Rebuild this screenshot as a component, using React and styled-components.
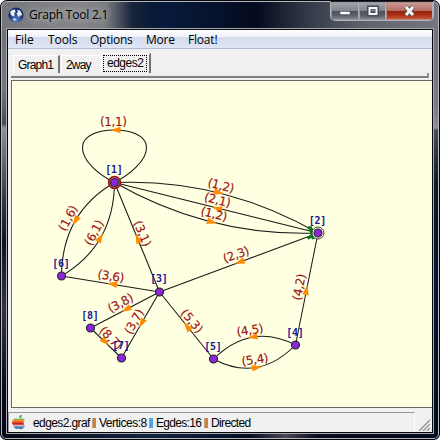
import React from "react";
import styled, { createGlobalStyle } from "styled-components";

const Global = createGlobalStyle`
  * { box-sizing: border-box; }
  body { margin: 0; background: #fff; overflow: hidden; }
`;

const Window = styled.div`
  width: 440px;
  height: 440px;
  display: flex;
  flex-direction: column;
  padding: 1px 6px 6px;
  border: 1px solid #05070b;
  border-radius: 7px 7px 6px 6px;
  box-shadow: inset 0 0 0 1px #b4b7bd;
  background:
    linear-gradient(90deg, #75777c 0, #85868a 18%, #797b80 24%, #27304080 30%, #0000 35%, #0000 58%, #555a6499 72%, #62646c 84%, #747780 100%) 0 0 / 100% 29px no-repeat,
    linear-gradient(90deg, #02030c, #08142c 20%, #081a3b 38%, #04091c 60%, #1b2236 80%, #454955) 0 0 / 100% 29px no-repeat,
    linear-gradient(180deg, #6d6f75 0, #74777c 20%, #484b55 28%, #8d9099 29%, #353945 45%, #101326 55%, #343246 70%, #080a1c 88%, #05071a) 0 0 / 9px 100% no-repeat,
    linear-gradient(180deg, #6c6f78 0, #777b84 24%, #8b909b 29%, #454b59 29.5%, #10172a 42%, #07152d 65%, #030b20) 100% 0 / 9px 100% no-repeat,
    linear-gradient(90deg, #090916, #11243e 35%, #080e24 57%, #4b4857 65%, #090d20 72%, #030b1c);
  font-family: "Open Sans", "Noto Sans", sans-serif;
  color: #000;
`;

const TitleBar = styled.header`
  height: 27px;
  display: flex;
  align-items: flex-start;
  flex-shrink: 0;
`;

const TitleIcon = styled.svg`
  width: 16px;
  height: 16px;
  margin: 5px 0 0 1px;
`;

const Title = styled.span`
  margin: 4px 0 0 5px;
  font-size: 12px;
  line-height: 18px;
  letter-spacing: -0.22px;
  white-space: nowrap;
  text-shadow: 0 0 6px #c8c8c8, 0 0 8px #b5b5b5;
  flex: 1;
`;

const Controls = styled.div`
  display: flex;
  height: 20px;
  width: 104px;
  margin-top: -1px;
  margin-right: -1px;
  border: 1px solid #aeb1b8;
  border-top-color: #22242a;
  border-radius: 0 0 5px 5px;
  overflow: hidden;
`;

const Control = styled.button`
  width: ${(p) => p.$width}px;
  padding: 0;
  border: 1px solid ${(p) => (p.$close ? "#b98982" : "#93969c")};
  border-right-color: #aeb1b8;
  background: ${(p) =>
    p.$close
      ? "linear-gradient(#c69c94 0, #b46b60 48%, #982311 50%, #a52d13 72%, #ca5839)"
      : "linear-gradient(#a0a3a8 0, #7f838a 48%, #4d535d 50%, #565d67 75%, #7b828c)"};
  display: flex;
  align-items: center;
  justify-content: center;
`;

const Client = styled.main`
  flex: 1;
  min-height: 0;
  border: 1px solid #080808;
  box-shadow: 0 0 0 1px #a5a8b0;
  background: #f0f0f0;
  display: flex;
  flex-direction: column;
  overflow: hidden;
`;

const MenuBar = styled.nav`
  display: flex;
  height: 19px;
  flex-shrink: 0;
  padding-left: 7px;
  background: linear-gradient(#fff 0, #eef1f8 38%, #d4dbed 40%, #e0e6f5 100%);
  border-bottom: 1px solid #b2bdd3;
`;

const MenuItem = styled.span`
  width: ${(p) => p.$width}px;
  font-size: 12px;
  line-height: 20px;
  letter-spacing: ${(p) => p.$spacing || 0}px;
  white-space: nowrap;
`;

const TabStrip = styled.div`
  height: 29px;
  flex-shrink: 0;
  margin: 0 3px 0 3px;
  border-bottom: 2px solid #808080;
  border-right: 2px solid #909090;
  background: linear-gradient(#f0f0f0, #f0f0f0) 0 0 / 100% 24px no-repeat, linear-gradient(#fff 0 60%, #eee 60%);
  clip-path: polygon(0 0, calc(100% - 3px) 0, calc(100% - 3px) 24px, 100% 24px, 100% 100%, 0 100%);
  display: flex;
  align-items: flex-end;
  padding: 0 0 3px 2px;
`;

const Tab = styled.div`
  width: ${(p) => p.$width}px;
  height: ${(p) => (p.$active ? 20 : 18)}px;
  padding: ${(p) => (p.$active ? "1px 2px 2px 1px" : "0 0 0 4px")};
  border: 1px solid #fff;
  border-bottom: 0;
  border-right: ${(p) => (p.$active || p.$shade ? "2px solid #737373" : "0")};
  font: 12px/18px "Liberation Sans", sans-serif;
  letter-spacing: ${(p) => p.$spacing || 0}px;
  white-space: nowrap;
  margin-right: ${(p) => (p.$active ? 0 : 1)}px;
`;

const TabFocus = styled.span`
  display: block;
  height: 17px;
  border: 1px dotted #000;
  padding-left: 3px;
  line-height: 14px;
`;

const Canvas = styled.section`
  height: 328px;
  flex-shrink: 0;
  margin: 2px 0 0 3px;
  border: 1px solid #686868;
  border-right: 0;
  background: #ffffe1;
`;

const GraphArt = styled.svg`
  display: block;
  width: 420px;
  height: 326px;
`;

const EdgeLabel = styled.text`
  font: 12px "DejaVu Sans", sans-serif;
  fill: #9c1418;
  stroke: #9c1418;
  stroke-width: 0.15px;
  text-anchor: middle;
`;

const NodeLabel = styled.text`
  font: bold 10px "DejaVu Sans Mono", monospace;
  fill: #171796;
  text-anchor: middle;
`;

const StatusBar = styled.footer`
  flex: 1;
  min-height: 0;
  display: flex;
  align-items: flex-end;
  padding-top: 4px;
`;

const StatusPanel = styled.div`
  width: 407px;
  height: 100%;
  border-top: 1px solid #999;
  border-left: 1px solid #999;
  border-right: 1px solid #fff;
  display: flex;
  align-items: center;
  font: 12px "Liberation Sans", sans-serif;
`;

const AppleIcon = styled.svg`
  width: 14px;
  height: 15px;
  margin-left: 3px;
  margin-bottom: 1px;
`;

const StatusText = styled.span`
  width: ${(p) => p.$width}px;
  letter-spacing: ${(p) => p.$spacing}px;
  margin-left: ${(p) => p.$left}px;
  white-space: nowrap;
`;

const Divider = styled.i`
  width: 4px;
  height: 10px;
  border-left: 1px solid #b8a28e;
  background: ${(p) => (p.$blue ? "#51a0df" : "#d2832f")};
`;

const Grip = styled.svg`
  width: 12px;
  height: 12px;
  margin: 0 1px 1px 3px;
`;

const nodes = [
  [1, 114.5, 182.5, 173],
  [2, 318, 233, 223.5],
  [3, 159.5, 292, 282],
  [4, 295.5, 345, 335.5],
  [5, 213.5, 359, 350],
  [6, 61.5, 276, 266.5],
  [7, 121.5, 358, 349],
  [8, 90.5, 328, 318.5],
];

const paths = [
  "M114.5 182.5C99 175 82 161 82.5 147C83 135 99 130 114.5 130C130 130 146 135 146.5 147C147 161 129 175 114.5 182.5",
  "M114.5 182.5Q222 178 318 233",
  "M318 233L114.5 182.5",
  "M114.5 182.5Q210 237 318 233",
  "M318 233L159.5 292",
  "M159.5 292L114.5 182.5",
  "M114.5 182.5Q62 213 61.5 276",
  "M61.5 276Q114 245 114.5 182.5",
  "M159.5 292L61.5 276",
  "M159.5 292L90.5 328",
  "M159.5 292L121.5 358",
  "M90.5 328L121.5 358",
  "M213.5 359L159.5 292",
  "M295.5 345L318 233",
  "M295.5 345Q251 322 213.5 359",
  "M213.5 359Q258 383 295.5 345",
];

const arrows = [
  [115.5, 130, 180], [219, 192.5, 14], [217, 208.5, 194], [212, 222, 14],
  [239.5, 262, 160], [137.5, 238.5, 248], [75.5, 221, 119], [100.5, 237.5, -60],
  [112, 284, 189], [126, 309.5, 152], [141.5, 323.5, 120], [105.5, 342, 44],
  [187, 326.5, 231], [306.5, 290, -79], [252.5, 337, 170], [257, 367.5, -9],
];

const labels = [
  ["(1,1)", 113.5, 122, 0], ["(1,2)", 221, 185.5, 14], ["(2,1)", 217.5, 200, 14],
  ["(1,2)", 214, 214, 14], ["(2,3)", 236, 254.5, -20], ["(3,1)", 142.5, 233.5, 67],
  ["(1,6)", 68, 218, -62], ["(6,1)", 94, 232.5, -62], ["(3,6)", 111, 276, 9],
  ["(3,8)", 120.5, 303, -28], ["(3,7)", 134, 321.5, -60], ["(8,7)", 111, 338, 46],
  ["(5,3)", 192, 321, 50], ["(4,2)", 299, 287, -79], ["(4,5)", 250, 330, -9],
  ["(5,4)", 255, 359.5, -9],
];

function Graph() {
  return (
    <GraphArt viewBox="12 81 420 326">
      {paths.map((d) => <path key={d} d={d} fill="none" stroke="#191919" strokeWidth="1.05" />)}
      <path d="M308 227L316 233L307.5 238.5M310 226.5L313.5 239" fill="none" stroke="#087819" strokeWidth="3.2" />
      {nodes.map(([id, x, y]) => (
        <g key={id}>
          {id === 1 && <circle cx={x} cy={y} r="5.8" fill="#e3d9d2" stroke="#a00d12" strokeWidth="1.8" />}
          {id === 2 && <circle cx={x} cy={y} r="6" fill="#ffffe1" stroke="#454545" />}
          <circle cx={x} cy={y} r="4" fill="#8528d2" stroke="#222" strokeWidth="1.1" />
          <circle cx={x} cy={y} r="2.9" fill="#8b26dc" />
        </g>
      ))}
      {arrows.map(([x, y, r]) => (
        <path key={`${x}-${y}`} d="M-5-3.3L5 0L-5 3.3Z" fill="#ff8c00" transform={`translate(${x} ${y}) rotate(${r})`} />
      ))}
      {labels.map(([text, x, y, r]) => (
        <EdgeLabel key={`${x}-${y}`} textLength="27" y="4.2" transform={`translate(${x} ${y}) rotate(${r})`}>{text}</EdgeLabel>
      ))}
      {nodes.map(([id, x, , y]) => <NodeLabel key={id} x={x - 0.5} y={y} textLength="17.5">{`[${id}]`}</NodeLabel>)}
    </GraphArt>
  );
}

function Globe() {
  return (
    <TitleIcon viewBox="0 0 16 16">
      <defs>
        <radialGradient id="globe" cx="50%" cy="85%">
          <stop offset="0" stopColor="#5c8bd0" />
          <stop offset="1" stopColor="#17306f" />
        </radialGradient>
      </defs>
      <circle cx="8" cy="8" r="7.6" fill="url(#globe)" />
      <path d="M2 5Q4 2 7 2.5L7 4L8 5L6 6L7 8L5 9.5L3 8ZM9 3L12 3.5L14 7L13 9.5L12 8L11 10.5L9.5 8.5L8.5 6L10 5ZM6 11L8 12L6.5 14L5 12.5Z" fill="#e4edf7" />
    </TitleIcon>
  );
}

function Apple() {
  return (
    <AppleIcon viewBox="0 0 14 15">
      <defs>
        <linearGradient id="apple" x2="0" y2="1">
          <stop offset="0" stopColor="#229a4a" />
          <stop offset=".28" stopColor="#4fb45a" />
          <stop offset=".36" stopColor="#f3a22d" />
          <stop offset=".48" stopColor="#f45d25" />
          <stop offset=".62" stopColor="#bd1820" />
          <stop offset=".75" stopColor="#efb7b3" />
          <stop offset=".83" stopColor="#3d9ed0" />
          <stop offset="1" stopColor="#305986" />
        </linearGradient>
      </defs>
      <path d="M7 4Q10 2 13 5Q10 7 13 11Q11 15 8 14Q6 13 4 14Q1 12 0 8Q0 2 7 4M7 3Q7 0 10 0Q10 3 7 3" fill="url(#apple)" />
    </AppleIcon>
  );
}

export default function App() {
  return (
    <>
      <Global />
      <Window>
        <TitleBar>
          <Globe />
          <Title>Graph Tool 2.1</Title>
          <Controls>
            <Control $width={28} aria-label="Minimize">
              <svg width="12" height="12"><rect x="1" y="6.5" width="10" height="3" fill="#fff" stroke="#565a62" strokeWidth=".6" /></svg>
            </Control>
            <Control $width={27} aria-label="Maximize">
              <svg width="12" height="12"><path d="M2 2.5H10V9.5H2Z" fill="none" stroke="#484c56" strokeWidth="4" /><path d="M2.5 3H9.5V9H2.5Z" fill="none" stroke="#f5f5f5" strokeWidth="2" /></svg>
            </Control>
            <Control $width={47} $close aria-label="Close">
              <svg width="13" height="12"><path d="M3 2L10 10M10 2L3 10" stroke="#535661" strokeWidth="4.6" /><path d="M3 2L10 10M10 2L3 10" stroke="#fafafa" strokeWidth="2.7" /></svg>
            </Control>
          </Controls>
        </TitleBar>
        <Client>
          <MenuBar>
            <MenuItem $width={33} $spacing={-0.1}>File</MenuItem>
            <MenuItem $width={42} $spacing={-0.1}>Tools</MenuItem>
            <MenuItem $width={56} $spacing={-0.25}>Options</MenuItem>
            <MenuItem $width={42} $spacing={-0.2}>More</MenuItem>
            <MenuItem $width={40} $spacing={-0.2}>Float!</MenuItem>
          </MenuBar>
          <TabStrip>
            <Tab $width={47} $shade $spacing={-0.8}>Graph1</Tab>
            <Tab $width={39} $spacing={-0.8}>2way</Tab>
            <Tab $width={50} $active $spacing={-0.5}><TabFocus>edges2</TabFocus></Tab>
          </TabStrip>
          <Canvas><Graph /></Canvas>
          <StatusBar>
            <StatusPanel>
              <Apple />
              <StatusText $width={59} $left={7} $spacing={-0.6}>edges2.graf</StatusText>
              <Divider />
              <StatusText $width={50} $left={3} $spacing={-0.5}>Vertices:8</StatusText>
              <Divider $blue />
              <StatusText $width={48} $left={3} $spacing={-0.7}>Egdes:16</StatusText>
              <Divider />
              <StatusText $width={45} $left={3} $spacing={-0.65}>Directed</StatusText>
            </StatusPanel>
            <Grip viewBox="0 0 12 12"><path d="M1 12L12 1M5 12L12 5M9 12L12 9" stroke="#999" strokeWidth="1.5" /></Grip>
          </StatusBar>
        </Client>
      </Window>
    </>
  );
}
